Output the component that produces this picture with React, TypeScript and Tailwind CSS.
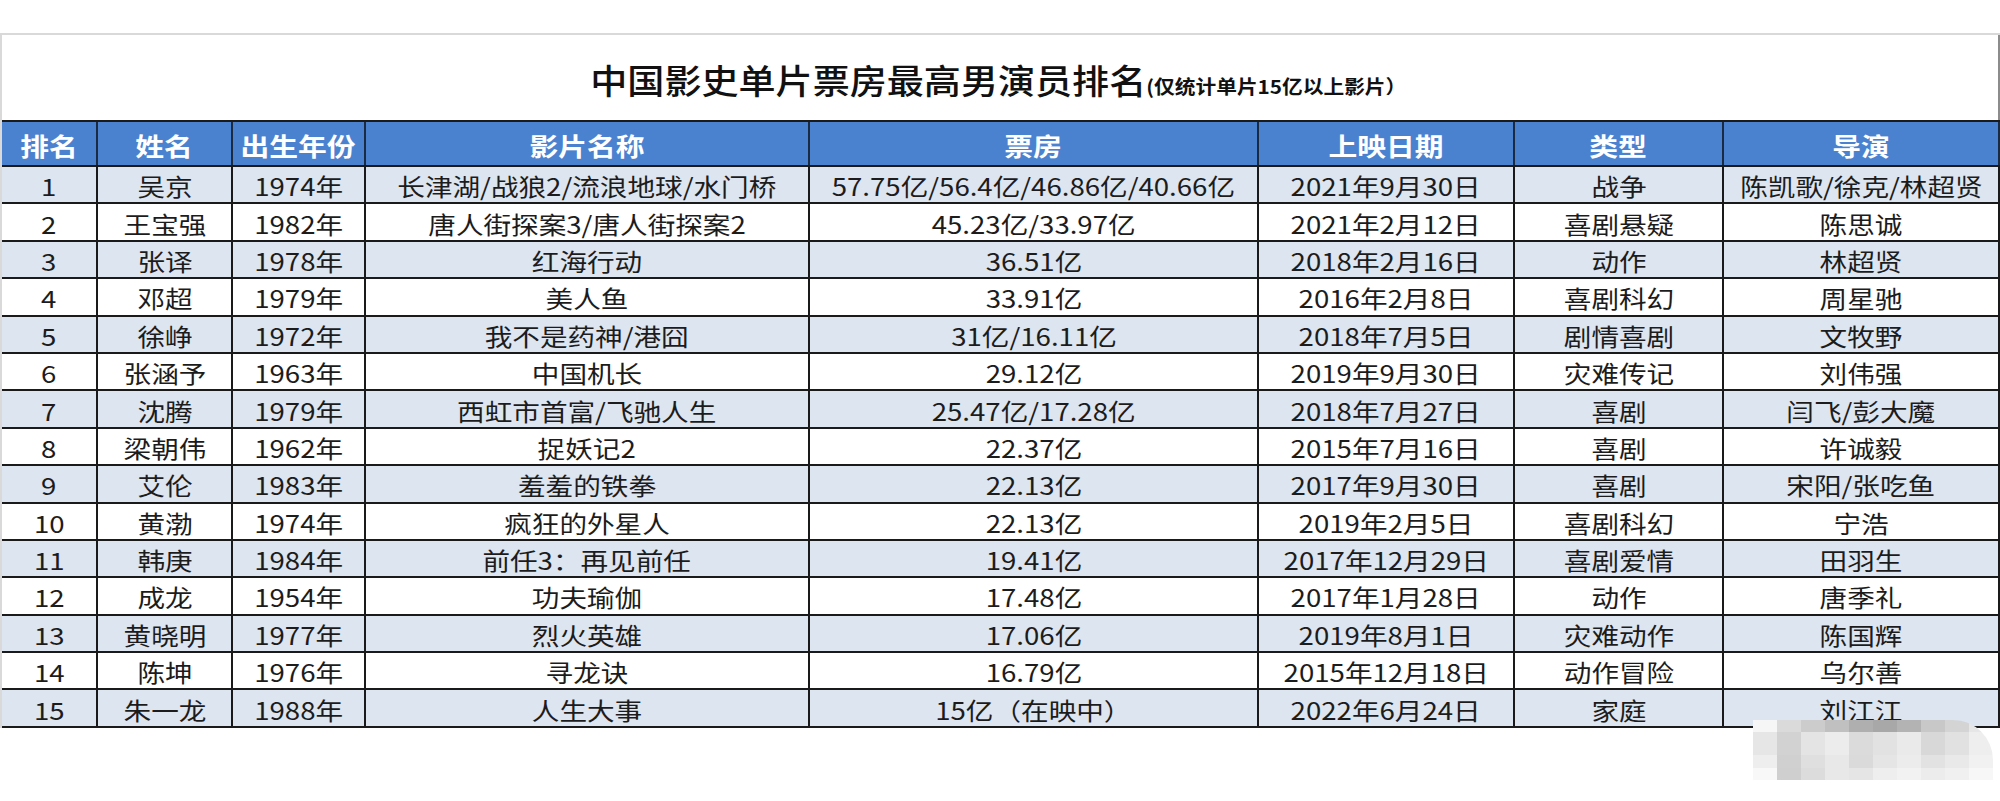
import React from "react";

const COLS = "grid grid-cols-[96px_135px_133px_444px_449px_256px_209px_276px]";

const headers = ["排名", "姓名", "出生年份", "影片名称", "票房", "上映日期", "类型", "导演"];

const rows: string[][] = [
  ["1", "吴京", "1974年", "长津湖/战狼2/流浪地球/水门桥", "57.75亿/56.4亿/46.86亿/40.66亿", "2021年9月30日", "战争", "陈凯歌/徐克/林超贤"],
  ["2", "王宝强", "1982年", "唐人街探案3/唐人街探案2", "45.23亿/33.97亿", "2021年2月12日", "喜剧悬疑", "陈思诚"],
  ["3", "张译", "1978年", "红海行动", "36.51亿", "2018年2月16日", "动作", "林超贤"],
  ["4", "邓超", "1979年", "美人鱼", "33.91亿", "2016年2月8日", "喜剧科幻", "周星驰"],
  ["5", "徐峥", "1972年", "我不是药神/港囧", "31亿/16.11亿", "2018年7月5日", "剧情喜剧", "文牧野"],
  ["6", "张涵予", "1963年", "中国机长", "29.12亿", "2019年9月30日", "灾难传记", "刘伟强"],
  ["7", "沈腾", "1979年", "西虹市首富/飞驰人生", "25.47亿/17.28亿", "2018年7月27日", "喜剧", "闫飞/彭大魔"],
  ["8", "梁朝伟", "1962年", "捉妖记2", "22.37亿", "2015年7月16日", "喜剧", "许诚毅"],
  ["9", "艾伦", "1983年", "羞羞的铁拳", "22.13亿", "2017年9月30日", "喜剧", "宋阳/张吃鱼"],
  ["10", "黄渤", "1974年", "疯狂的外星人", "22.13亿", "2019年2月5日", "喜剧科幻", "宁浩"],
  ["11", "韩庚", "1984年", "前任3：再见前任", "19.41亿", "2017年12月29日", "喜剧爱情", "田羽生"],
  ["12", "成龙", "1954年", "功夫瑜伽", "17.48亿", "2017年1月28日", "动作", "唐季礼"],
  ["13", "黄晓明", "1977年", "烈火英雄", "17.06亿", "2019年8月1日", "灾难动作", "陈国辉"],
  ["14", "陈坤", "1976年", "寻龙诀", "16.79亿", "2015年12月18日", "动作冒险", "乌尔善"],
  ["15", "朱一龙", "1988年", "人生大事", "15亿（在映中）", "2022年6月24日", "家庭", "刘江江"],
];

const mosaic: { h: string; cells: string[] }[] = [
  { h: "h-[12px]", cells: ["bg-[#f6f6f6]", "bg-[#dadada]", "bg-[#cccccc]", "bg-[#c0c0c0]", "bg-[#afafaf]", "bg-[#a8a8a8]", "bg-[#b3b3b3]", "bg-[#c8c8c8]", "bg-[#d4d4d4]", "bg-[#e6e6e6]"] },
  { h: "h-[23px]", cells: ["bg-[#e6e6e6]", "bg-[#d2d2d2]", "bg-[#e4e4e4]", "bg-[#ececec]", "bg-[#dbdbdb]", "bg-[#e2e2e2]", "bg-[#eaeaea]", "bg-[#d8d8d8]", "bg-[#e1e1e1]", "bg-[#eeeeee]"] },
  { h: "h-[13px]", cells: ["bg-[#eeeeee]", "bg-[#d0d0d0]", "bg-[#dfdfdf]", "bg-[#e8e8e8]", "bg-[#dadada]", "bg-[#e5e5e5]", "bg-[#ececec]", "bg-[#e2e2e2]", "bg-[#e9e9e9]", "bg-[#f1f1f1]"] },
  { h: "h-[12px]", cells: ["bg-[#f8f8f8]", "bg-[#cfcfcf]", "bg-[#dcdcdc]", "bg-[#e8e8e8]", "bg-[#e5e5e5]", "bg-[#eeeeee]", "bg-[#f2f2f2]", "bg-[#ececec]", "bg-[#f0f0f0]", "bg-[#f7f7f7]"] },
];

export default function App() {
  return (
    <div className="relative w-[2000px] h-[801px] overflow-hidden bg-white pt-[33px] font-['Noto_Sans_CJK_SC',sans-serif] text-[#1c1c1c]">
      <div className="w-[2000px] border-t-2 border-l-2 border-[#d9d9d9]">
        {/* Title */}
        <div className="h-[85px] flex items-center justify-center border-r-2 border-[#8c8c8c]">
          <div className="inline-flex items-baseline scale-x-[1.09] pt-[4px] ml-[-4px]">
            <span className="text-[34px] font-medium leading-none text-[#111]">中国影史单片票房最高男演员排名</span>
            <span className="text-[19px] font-bold leading-none text-[#111]">(仅统计单片15亿以上影片）</span>
          </div>
        </div>

        {/* Header */}
        <div className={`${COLS} h-[47px] border-t-2 border-b-2 border-[#1a1a1a] bg-[#4b82d0]`}>
          {headers.map((h) => (
            <div key={h} className="flex items-center justify-center border-r-2 border-[#1a2a40] pt-[3px]">
              <span className="inline-block scale-x-[1.15] text-[25px] font-bold leading-none text-white">{h}</span>
            </div>
          ))}
        </div>

        {/* Body */}
        {rows.map((r, i) => (
          <div
            key={r[0]}
            className={`${COLS} h-[37.4px] border-b-2 border-[#1a1a1a] ${i % 2 === 0 ? "bg-[#dce5f0]" : "bg-white"}`}
          >
            {r.map((c, j) => (
              <div key={j} className="flex items-center justify-center border-r-2 border-[#1a1a1a] pt-[3px] whitespace-nowrap">
                <span className="inline-block scale-x-[1.15] text-[24px] leading-none">{c}</span>
              </div>
            ))}
          </div>
        ))}
      </div>

      {/* Mosaic watermark */}
      <div className="absolute left-[1753px] top-[720px] flex flex-col rounded-tr-[40px] overflow-hidden">
        {mosaic.map((row, ri) => (
          <div key={ri} className={`flex ${row.h}`}>
            {row.cells.map((c, ci) => (
              <div key={ci} className={`w-[24px] ${c}`} />
            ))}
          </div>
        ))}
      </div>
    </div>
  );
}
